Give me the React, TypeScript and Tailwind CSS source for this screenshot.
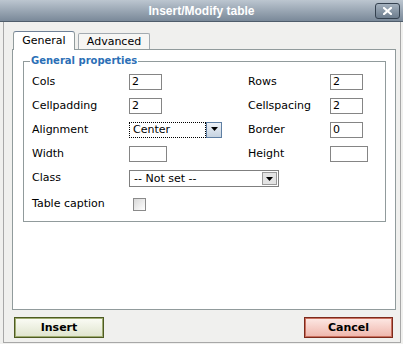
import React from "react";

const Arrow = () => (
  <svg width="7" height="4" viewBox="0 0 7 4" className="mt-[4px]">
    <path d="M0 0 H7 L3.5 4 Z" fill="#000" />
  </svg>
);

const TextBox = ({ value = "", w = "w-[33px]" }: { value?: string; w?: string }) => (
  <div className={`${w} h-[16px] border border-[#858585] bg-white pl-[2px] leading-[14px]`}>{value}</div>
);

export default function App() {
  return (
    <div className="w-[403px] h-[344px] bg-[#f0f0ee] font-['DejaVu_Sans',sans-serif] text-[11px] text-black overflow-hidden">
      {/* Barre de titre */}
      <div className="relative h-[22px] flex items-center justify-center bg-linear-to-b from-[#bcc6d0] to-[#7a8999] border-b border-[#4f5d6b]">
        <span className="font-['Liberation_Sans',Arial,sans-serif] font-bold text-[12px] text-white">Insert/Modify table</span>
        <div className="absolute right-[3px] top-[3px] w-[25px] h-[16px] rounded-[3px] border border-[#34414f] bg-linear-to-b from-[#a4b1be] to-[#6d7d8e] flex items-center justify-center">
          <svg width="9" height="8" viewBox="0 0 9 8">
            <path d="M1 1 L8 7 M8 1 L1 7" stroke="#fff" strokeWidth="2.2" strokeLinecap="square" />
          </svg>
        </div>
      </div>

      {/* Corps */}
      <div className="ml-[3px] w-[398px] h-[321px] border-x border-b border-[#a8a8a8] pt-[9px] pl-[8px] flex flex-col">
        {/* Onglets */}
        <div className="relative z-10 h-[19px] -mb-px pl-[1px] flex items-start">
          <div className="w-[62px] h-[19px] bg-white border border-b-0 border-[#919b9c] border-t-[#6f8197] rounded-t-[3px] flex items-center justify-center leading-none pb-[1px]">
            General
          </div>
          <div className="ml-[3px] mt-[2px] w-[72px] h-[16px] bg-[#f6f6f4] border border-b-0 border-[#a3aab0] rounded-t-[2px] flex items-center justify-center leading-none">
            Advanced
          </div>
        </div>

        {/* Panneau */}
        <div className="w-[384px] h-[261px] border border-[#919b9c] bg-white px-[10px] pt-[5px]">
          <fieldset className="w-[363px] m-0 p-0 pb-[10px] border border-[#919b9c]">
            <legend className="ml-[6px] px-[1px] font-bold text-[10px] leading-[12px] text-[#2b6fb6]">General properties</legend>

            <div className="grid grid-cols-[97px_119px_82px_1fr] auto-rows-[24px] items-center pl-[8px] pt-[3px]">
              <span>Cols</span>
              <TextBox value="2" />
              <span>Rows</span>
              <TextBox value="2" />

              <span>Cellpadding</span>
              <TextBox value="2" />
              <span>Cellspacing</span>
              <TextBox value="2" />

              <span>Alignment</span>
              <div className="w-[93px] h-[16px] flex">
                <div className="flex-1 border border-dotted border-black pl-[3px] leading-[14px]">Center</div>
                <div className="w-[16px] border border-[#5f7fa3] bg-linear-to-b from-[#eef2f7] to-[#c6d3e1] flex justify-center">
                  <Arrow />
                </div>
              </div>
              <span>Border</span>
              <TextBox value="0" />

              <span>Width</span>
              <TextBox w="w-[38px]" />
              <span>Height</span>
              <TextBox w="w-[38px]" />

              <span>Class</span>
              <div className="col-span-3 w-[150px] h-[17px] border border-[#7f7f7f] bg-white flex">
                <div className="flex-1 pl-[4px] leading-[15px]">-- Not set --</div>
                <div className="w-[15px] m-[1px] border border-[#9a9a9a] bg-[#e4e4e4] flex justify-center">
                  <Arrow />
                </div>
              </div>
            </div>

            <div className="mt-[8px] pl-[8px] h-[13px] flex items-center">
              <span className="w-[97px]">Table caption</span>
              <div className="ml-[4px] w-[13px] h-[13px] border border-[#8a8a8a] bg-linear-to-br from-[#d8d8d8] to-white" />
            </div>
          </fieldset>
        </div>

        {/* Boutons */}
        <div className="w-[384px] mt-[7px] pl-[2px] pr-[3px] flex justify-between">
          <button className="w-[90px] h-[21px] border border-[#4e5b22] shadow-[inset_0_0_0_1px_#9fac72] bg-linear-to-b from-[#fbfcf6] to-[#dfe4cd] font-bold text-[11px] leading-none">
            Insert
          </button>
          <button className="w-[89px] h-[21px] border border-[#7d2a1c] shadow-[inset_0_0_0_1px_#c9705f] bg-linear-to-b from-[#fde9e5] to-[#eeb5ab] font-bold text-[11px] leading-none">
            Cancel
          </button>
        </div>
      </div>
    </div>
  );
}
